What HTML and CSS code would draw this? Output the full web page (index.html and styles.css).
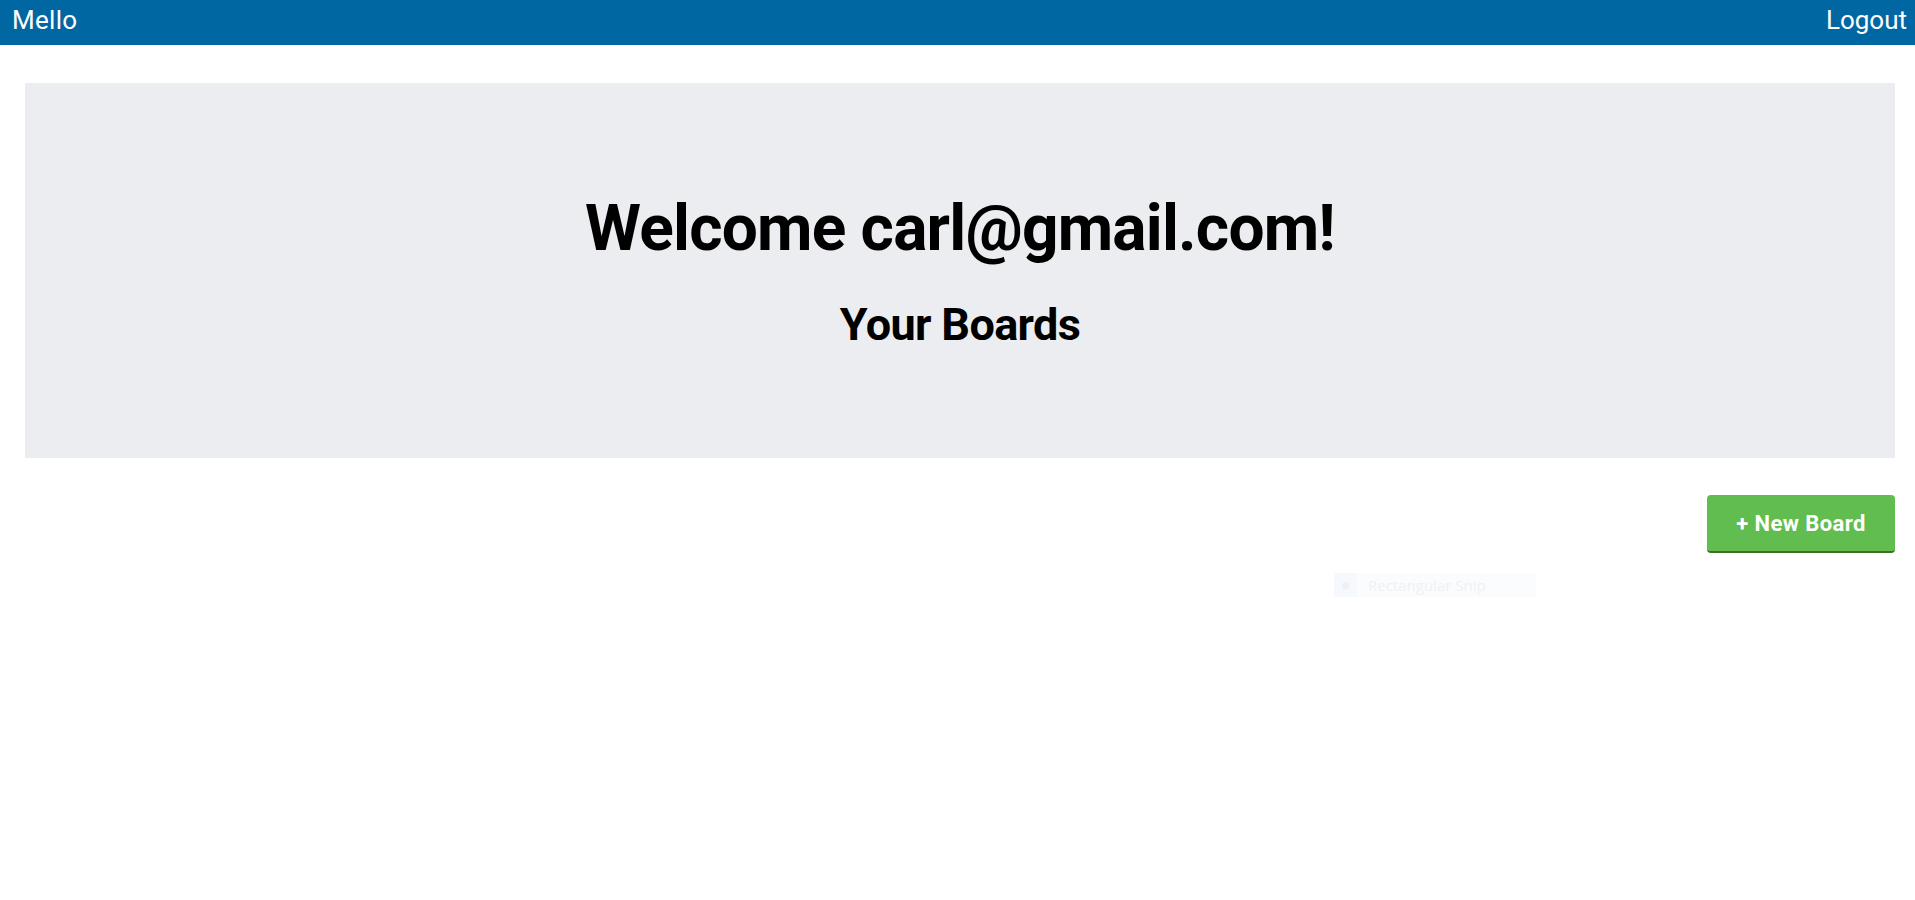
FILE: index.html
```html
<!DOCTYPE html>
<html lang="en">
<head>
<meta charset="utf-8">
<title>Mello</title>
<link rel="stylesheet" href="styles.css">
</head>
<body>
<nav class="navbar">
  <a class="brand" href="#">Mello</a>
  <a class="logout" href="#">Logout</a>
</nav>
<main class="content">
  <section class="jumbotron">
    <h1 class="welcome">Welcome carl@gmail.com!</h1>
    <h2 class="subtitle">Your Boards</h2>
  </section>
  <div class="actions">
    <button class="btn-new" type="button">+ New Board</button>
  </div>
</main>
<div class="snip">
  <span class="snip-icon"><span class="snip-dot"></span></span>
  <span class="snip-label">Rectangular Snip</span>
</div>
</body>
</html>
```

FILE: styles.css
```css
* { box-sizing: border-box; }

html, body {
  margin: 0;
  padding: 0;
  background: #ffffff;
  font-family: Roboto, "Liberation Sans", Arial, sans-serif;
  color: #000;
}

.navbar {
  height: 45px;
  background: #0067a3;
  display: flex;
  justify-content: space-between;
  align-items: flex-start;
  padding: 5px 8px 0 12px;
}

.brand, .logout {
  color: #fff;
  text-decoration: none;
  font-size: 26px;
  line-height: normal;
}

.brand {
  letter-spacing: 0.3px;
}

.content {
  padding: 38px 20px 0 25px;
}

.jumbotron {
  background: #ecedf0;
  padding: 108px 0 107px;
  text-align: center;
}

.welcome {
  margin: 0;
  font-size: 64px;
  font-weight: 700;
  line-height: normal;
  letter-spacing: -0.8px;
}

.subtitle {
  margin: 32px 0 0;
  font-size: 45px;
  font-weight: 700;
  line-height: normal;
  letter-spacing: -0.65px;
}

.actions {
  display: flex;
  justify-content: flex-end;
  padding-top: 37px;
}

.btn-new {
  width: 188px;
  height: 58px;
  background: #61bd4f;
  border: none;
  border-bottom: 2px solid #3f6f21;
  border-radius: 4px;
  color: #fff;
  font-family: Roboto, "Liberation Sans", Arial, sans-serif;
  font-size: 22px;
  font-weight: 700;
  letter-spacing: 0.4px;
  padding: 0;
  cursor: pointer;
}

.snip {
  position: absolute;
  left: 1334px;
  top: 573px;
  width: 202px;
  height: 24px;
  background: #fbfcfe;
  display: flex;
  align-items: center;
}

.snip-icon {
  width: 23px;
  height: 24px;
  background: #f5f9fe;
  display: flex;
  align-items: center;
  justify-content: center;
}

.snip-dot {
  width: 7px;
  height: 7px;
  border-radius: 50%;
  background: #f1f0f0;
}

.snip-label {
  margin-left: 11px;
  font-family: "Open Sans", "Noto Sans", sans-serif;
  font-size: 15px;
  color: #eff1f4;
}
```
